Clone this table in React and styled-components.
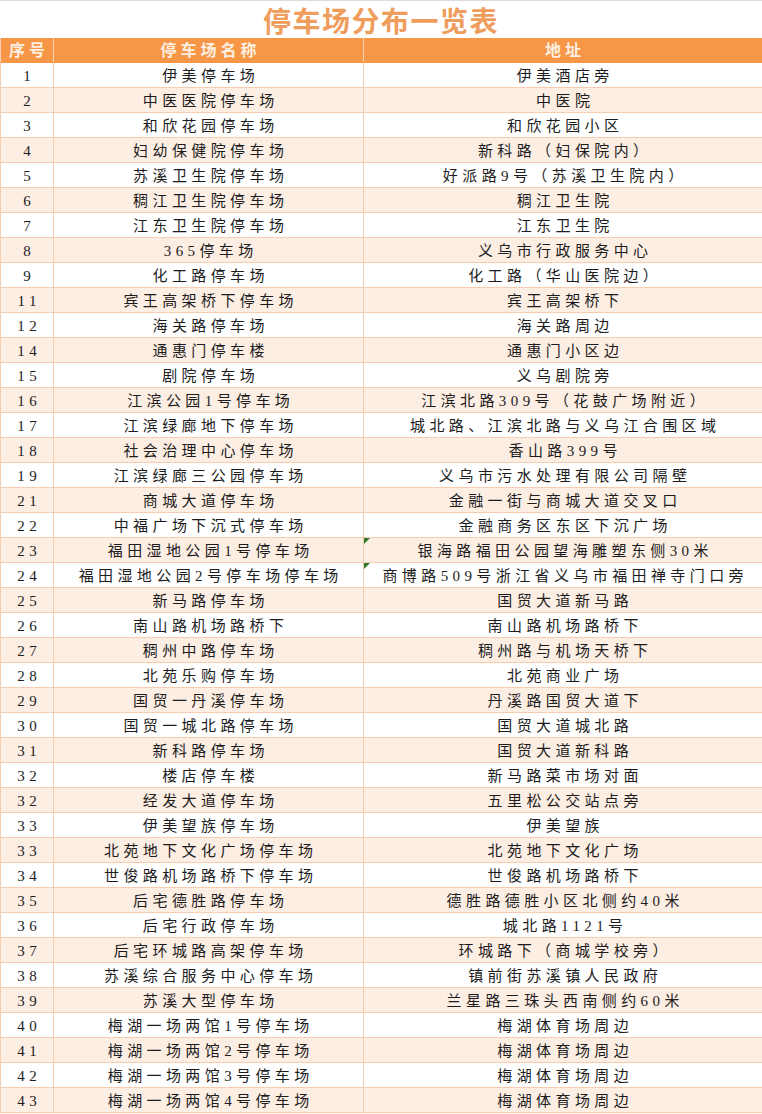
import React from "react";
import styled, { createGlobalStyle } from "styled-components";

const GlobalStyle = createGlobalStyle`
  html, body {
    margin: 0;
    padding: 0;
    background: #ffffff;
  }
  body {
    font-family: "Liberation Serif", "Noto Sans CJK SC", serif;
    color: #1a1a1a;
  }
`;

const Sheet = styled.div`
  width: 762px;
  background: #ffffff;
  border-top: 1px solid #dcdcdc;
  box-sizing: border-box;
`;

const Title = styled.h1`
  margin: 0;
  height: 37px;
  display: flex;
  align-items: center;
  justify-content: center;
  font-family: "Liberation Serif", "Noto Sans CJK SC", serif;
  font-size: 28px;
  font-weight: 700;
  letter-spacing: 1.5px;
  color: #ef9d5c;
`;

const Row = styled.div`
  display: grid;
  grid-template-columns: 53px 310px 1fr;
  height: 25px;
  box-sizing: border-box;
  border-bottom: 1px solid ${({ $head }) => ($head ? "#f79646" : "#f6cdb0")};
  border-left: 1px solid #f6cdb0;
  background: ${({ $head, $shade }) =>
    $head ? "#f79646" : $shade ? "#fdeee4" : "#ffffff"};
`;

const Cell = styled.div`
  position: relative;
  display: flex;
  align-items: center;
  justify-content: center;
  white-space: nowrap;
  box-sizing: border-box;
  border-right: 1px solid ${({ $head }) => ($head ? "#fbd3b2" : "#f6cdb0")};
  font-size: ${({ $head }) => ($head ? "16px" : "15px")};
  font-weight: ${({ $head }) => ($head ? 700 : 400)};
  color: ${({ $head }) => ($head ? "#fdf0e2" : "#1c1c1c")};
  letter-spacing: ${({ $head }) => ($head ? "4px" : "4.4px")};
  padding-left: ${({ $head }) => ($head ? "4px" : "4.4px")};
  padding-top: 2px;
  line-height: 1;

  &:last-child {
    border-right: none;
  }
`;

const Flag = styled.span`
  position: absolute;
  left: 0;
  top: 0;
  width: 0;
  height: 0;
  border-top: 6px solid #2f7a2a;
  border-right: 6px solid transparent;
`;

const rows = [
  ["1", "伊美停车场", "伊美酒店旁"],
  ["2", "中医医院停车场", "中医院"],
  ["3", "和欣花园停车场", "和欣花园小区"],
  ["4", "妇幼保健院停车场", "新科路（妇保院内）"],
  ["5", "苏溪卫生院停车场", "好派路9号（苏溪卫生院内）"],
  ["6", "稠江卫生院停车场", "稠江卫生院"],
  ["7", "江东卫生院停车场", "江东卫生院"],
  ["8", "365停车场", "义乌市行政服务中心"],
  ["9", "化工路停车场", "化工路（华山医院边）"],
  ["11", "宾王高架桥下停车场", "宾王高架桥下"],
  ["12", "海关路停车场", "海关路周边"],
  ["14", "通惠门停车楼", "通惠门小区边"],
  ["15", "剧院停车场", "义乌剧院旁"],
  ["16", "江滨公园1号停车场", "江滨北路309号（花鼓广场附近）"],
  ["17", "江滨绿廊地下停车场", "城北路、江滨北路与义乌江合围区域"],
  ["18", "社会治理中心停车场", "香山路399号"],
  ["19", "江滨绿廊三公园停车场", "义乌市污水处理有限公司隔壁"],
  ["21", "商城大道停车场", "金融一街与商城大道交叉口"],
  ["22", "中福广场下沉式停车场", "金融商务区东区下沉广场"],
  ["23", "福田湿地公园1号停车场", "银海路福田公园望海雕塑东侧30米", true],
  ["24", "福田湿地公园2号停车场停车场", "商博路509号浙江省义乌市福田禅寺门口旁", true],
  ["25", "新马路停车场", "国贸大道新马路"],
  ["26", "南山路机场路桥下", "南山路机场路桥下"],
  ["27", "稠州中路停车场", "稠州路与机场天桥下"],
  ["28", "北苑乐购停车场", "北苑商业广场"],
  ["29", "国贸一丹溪停车场", "丹溪路国贸大道下"],
  ["30", "国贸一城北路停车场", "国贸大道城北路"],
  ["31", "新科路停车场", "国贸大道新科路"],
  ["32", "楼店停车楼", "新马路菜市场对面"],
  ["32", "经发大道停车场", "五里松公交站点旁"],
  ["33", "伊美望族停车场", "伊美望族"],
  ["33", "北苑地下文化广场停车场", "北苑地下文化广场"],
  ["34", "世俊路机场路桥下停车场", "世俊路机场路桥下"],
  ["35", "后宅德胜路停车场", "德胜路德胜小区北侧约40米"],
  ["36", "后宅行政停车场", "城北路1121号"],
  ["37", "后宅环城路高架停车场", "环城路下（商城学校旁）"],
  ["38", "苏溪综合服务中心停车场", "镇前街苏溪镇人民政府"],
  ["39", "苏溪大型停车场", "兰星路三珠头西南侧约60米"],
  ["40", "梅湖一场两馆1号停车场", "梅湖体育场周边"],
  ["41", "梅湖一场两馆2号停车场", "梅湖体育场周边"],
  ["42", "梅湖一场两馆3号停车场", "梅湖体育场周边"],
  ["43", "梅湖一场两馆4号停车场", "梅湖体育场周边"],
];

export default function App() {
  return (
    <>
      <GlobalStyle />
      <Sheet>
        <Title>停车场分布一览表</Title>
        <Row $head>
          <Cell $head>序号</Cell>
          <Cell $head>停车场名称</Cell>
          <Cell $head>地址</Cell>
        </Row>
        {rows.map(([no, name, addr, flag], i) => (
          <Row key={i} $shade={i % 2 === 1}>
            <Cell>{no}</Cell>
            <Cell>{name}</Cell>
            <Cell>
              {flag && <Flag />}
              {addr}
            </Cell>
          </Row>
        ))}
      </Sheet>
    </>
  );
}
